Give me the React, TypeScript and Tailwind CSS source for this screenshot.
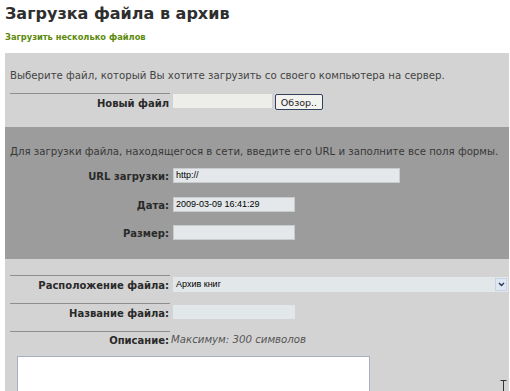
const Label = ({ text, line = false, pt = "pt-[2px]" }: { text: string; line?: boolean; pt?: string }) => (
  <div
    className={`ml-[5px] w-[160px] shrink-0 pr-[1px] text-right text-[10px] font-bold leading-[13px] text-[#2a2a2a] ${pt} ${
      line ? "border-t border-[#8e8e8e]" : ""
    }`}
  >
    {text}
  </div>
);

const Field = ({ value = "", w, bg = "bg-[#e4e8ea]" }: { value?: string; w: string; bg?: string }) => (
  <div
    className={`${w} ${bg} h-[15px] border border-[#c9cccd] pl-[2px] font-['Liberation_Sans',Arial,sans-serif] text-[9px] leading-[13px] text-black`}
  >
    {value}
  </div>
);

export default function App() {
  return (
    <div className="h-[391px] w-[510px] overflow-hidden bg-white font-['DejaVu_Sans',Verdana,sans-serif]">
      <h1 className="pl-[5px] pt-[3px] text-[16px] font-bold leading-[22px] text-[#2e2e2e]">
        Загрузка файла в архив
      </h1>
      <a className="mt-[7px] block pl-[5px] text-[8.3px] font-bold leading-[11px] text-[#5c8a0c]">
        Загрузить несколько файлов
      </a>

      <div className="ml-[5px] mt-[10px] w-[504px] bg-[#d3d3d3] pb-[17px] pt-[16px]">
        <p className="whitespace-nowrap pl-[5px] text-[10.2px] leading-[13px] text-[#444]">
          Выберите файл, который Вы хотите загрузить со своего компьютера на сервер.
        </p>
        <div className="mt-[11px] flex items-start">
          <Label text="Новый файл" line pt="pt-[3px]" />
          <div className="ml-[2px] h-[16px] w-[101px] border border-[#cfd2d0] bg-[#edeeea]" />
          <button className="ml-[2px] mt-[1px] h-[16px] w-[48px] rounded-[2px] border border-[#33415e] bg-[#f2f2ef] text-[9.5px] leading-[13px] text-[#222]">
            Обзор..
          </button>
        </div>
      </div>

      <div className="ml-[5px] w-[504px] bg-[#9c9c9c] pb-[19px] pt-[18px]">
        <p className="whitespace-nowrap pl-[5px] text-[10.2px] leading-[13px] text-[#383838]">
          Для загрузки файла, находящегося в сети, введите его URL и заполните все поля формы.
        </p>
        <div className="mt-[10px] flex items-start">
          <Label text="URL загрузки:" />
          <div className="ml-[3px]">
            <Field value="http://" w="w-[227px]" />
          </div>
        </div>
        <div className="mt-[14px] flex items-start">
          <Label text="Дата:" />
          <div className="ml-[3px]">
            <Field value="2009-03-09 16:41:29" w="w-[122px]" />
          </div>
        </div>
        <div className="mt-[13px] flex items-start">
          <Label text="Размер:" />
          <div className="ml-[3px]">
            <Field w="w-[122px]" />
          </div>
        </div>
      </div>

      <div className="ml-[5px] h-[200px] w-[504px] bg-[#d3d3d3] pt-[16px]">
        <div className="flex items-start">
          <Label text="Расположение файла:" line pt="pt-[3px]" />
          <div className="ml-[3px] mt-[2px] flex h-[15px] w-[335px] items-center justify-between bg-[#e2e7ea] pl-[3px] pr-[1px] font-['Liberation_Sans',Arial,sans-serif] text-[9px] text-black">
            <span>Архив книг</span>
            <span className="flex h-[13px] w-[12px] items-center justify-center border border-[#c8d2e6] bg-[#dfe6f3]">
              <svg width="7" height="5" viewBox="0 0 7 5">
                <path d="M1 1l2.5 2.5L6 1" fill="none" stroke="#2a3550" strokeWidth="1.4" />
              </svg>
            </span>
          </div>
        </div>
        <div className="mt-[11px] flex items-start">
          <Label text="Название файла:" line pt="pt-[3px]" />
          <div className="ml-[3px] mt-[2px] h-[14px] w-[122px] bg-[#e2e7ea]" />
        </div>
        <div className="mt-[11px] flex items-start">
          <Label text="Описание:" line pt="pt-[2px]" />
          <span className="ml-[1px] mt-[2px] text-[10.2px] italic leading-[13px] text-[#555]">
            Максимум: 300 символов
          </span>
        </div>
        <div className="mt-[9px] flex items-start justify-between">
          <div className="ml-[12px] h-[60px] w-[353px] border border-[#a7b0c2] bg-white" />
          <svg className="mr-[2px] mt-[24px]" width="7" height="14" viewBox="0 0 7 14">
            <path d="M0.5 0.5h6M3.5 0.5v13M0.5 13.5h6" fill="none" stroke="#333" strokeWidth="1" />
          </svg>
        </div>
      </div>
    </div>
  );
}
